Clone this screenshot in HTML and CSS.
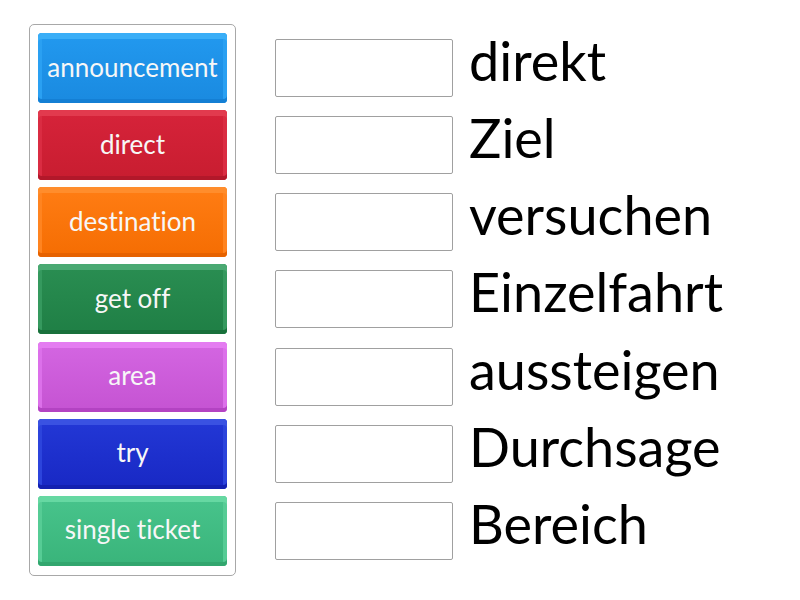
FILE: index.html
```html
<!DOCTYPE html>
<html>
<head>
<meta charset="utf-8">
<link rel="stylesheet" href="styles.css">
</head>
<body>
<div class="page">
  <div class="bank">
    <div class="tile blue">announcement</div>
    <div class="tile red">direct</div>
    <div class="tile orange">destination</div>
    <div class="tile green">get off</div>
    <div class="tile purple">area</div>
    <div class="tile navy">try</div>
    <div class="tile teal">single ticket</div>
  </div>
  <div class="targets">
    <div class="row"><div class="slot"></div><div class="word">direkt</div></div>
    <div class="row"><div class="slot"></div><div class="word">Ziel</div></div>
    <div class="row"><div class="slot"></div><div class="word">versuchen</div></div>
    <div class="row"><div class="slot"></div><div class="word">Einzelfahrt</div></div>
    <div class="row"><div class="slot"></div><div class="word">aussteigen</div></div>
    <div class="row"><div class="slot"></div><div class="word">Durchsage</div></div>
    <div class="row"><div class="slot"></div><div class="word">Bereich</div></div>
  </div>
</div>
</body>
</html>
```

FILE: styles.css
```css
html, body {
  margin: 0;
  padding: 0;
  background: #ffffff;
}
.page {
  width: 800px;
  height: 600px;
  display: flex;
  align-items: flex-start;
  font-family: Lato, "Noto Sans", sans-serif;
  font-variant-ligatures: none;
}
.bank {
  margin-left: 29px;
  margin-top: 24px;
  width: 189px;
  padding: 8px 8px 9px 8px;
  border: 1px solid #a8a8a8;
  border-radius: 5px;
  display: flex;
  flex-direction: column;
  gap: 7.17px;
}
.tile {
  height: 70px;
  border-radius: 4px;
  display: flex;
  align-items: center;
  justify-content: center;
  color: #f7f7f7;
  font-size: 26px;
  padding-bottom: 3px;
  box-sizing: border-box;
}
.blue {
  background: linear-gradient(#2299ef, #1a8ae0);
  box-shadow: inset 0 6px 0 #3aaef7, inset 0 -4px 0 #147fd4, inset 4px 0 0 #2aa0f2, inset -4px 0 0 #2aa0f2;
}
.red {
  background: linear-gradient(#d6233a, #c81d30);
  box-shadow: inset 0 6px 0 #e23a4e, inset 0 -4px 0 #b2182a, inset 4px 0 0 #da2c42, inset -4px 0 0 #da2c42;
}
.orange {
  background: linear-gradient(#ff7d14, #f56d02);
  box-shadow: inset 0 6px 0 #ff8d2c, inset 0 -4px 0 #e66200, inset 4px 0 0 #ff8420, inset -4px 0 0 #ff8420;
}
.green {
  background: linear-gradient(#2a8e52, #1f7f45);
  box-shadow: inset 0 6px 0 #4aa972, inset 0 -4px 0 #19703b, inset 4px 0 0 #35995e, inset -4px 0 0 #35995e;
}
.purple {
  background: linear-gradient(#d466e2, #c553d2);
  box-shadow: inset 0 6px 0 #e47cf1, inset 0 -4px 0 #b343c2, inset 4px 0 0 #dc70ea, inset -4px 0 0 #dc70ea;
}
.navy {
  background: linear-gradient(#2338d6, #1828c4);
  box-shadow: inset 0 6px 0 #3a52e2, inset 0 -4px 0 #1320b0, inset 4px 0 0 #2c44dc, inset -4px 0 0 #2c44dc;
}
.teal {
  background: linear-gradient(#48c48c, #39b47a);
  box-shadow: inset 0 6px 0 #66d8a2, inset 0 -4px 0 #32a66e, inset 4px 0 0 #56cc95, inset -4px 0 0 #56cc95;
}
.targets {
  margin-left: 39px;
  margin-top: 39px;
  display: flex;
  flex-direction: column;
  gap: 19.17px;
}
.row {
  display: flex;
  align-items: flex-start;
  height: 58px;
}
.slot {
  width: 178px;
  height: 58px;
  box-sizing: border-box;
  border: 1px solid #a0a0a0;
  border-radius: 2px;
  background: #ffffff;
}
.word {
  margin-left: 16px;
  margin-top: -5px;
  font-size: 54px;
  color: #000000;
  line-height: 54px;
  white-space: nowrap;
}
```
